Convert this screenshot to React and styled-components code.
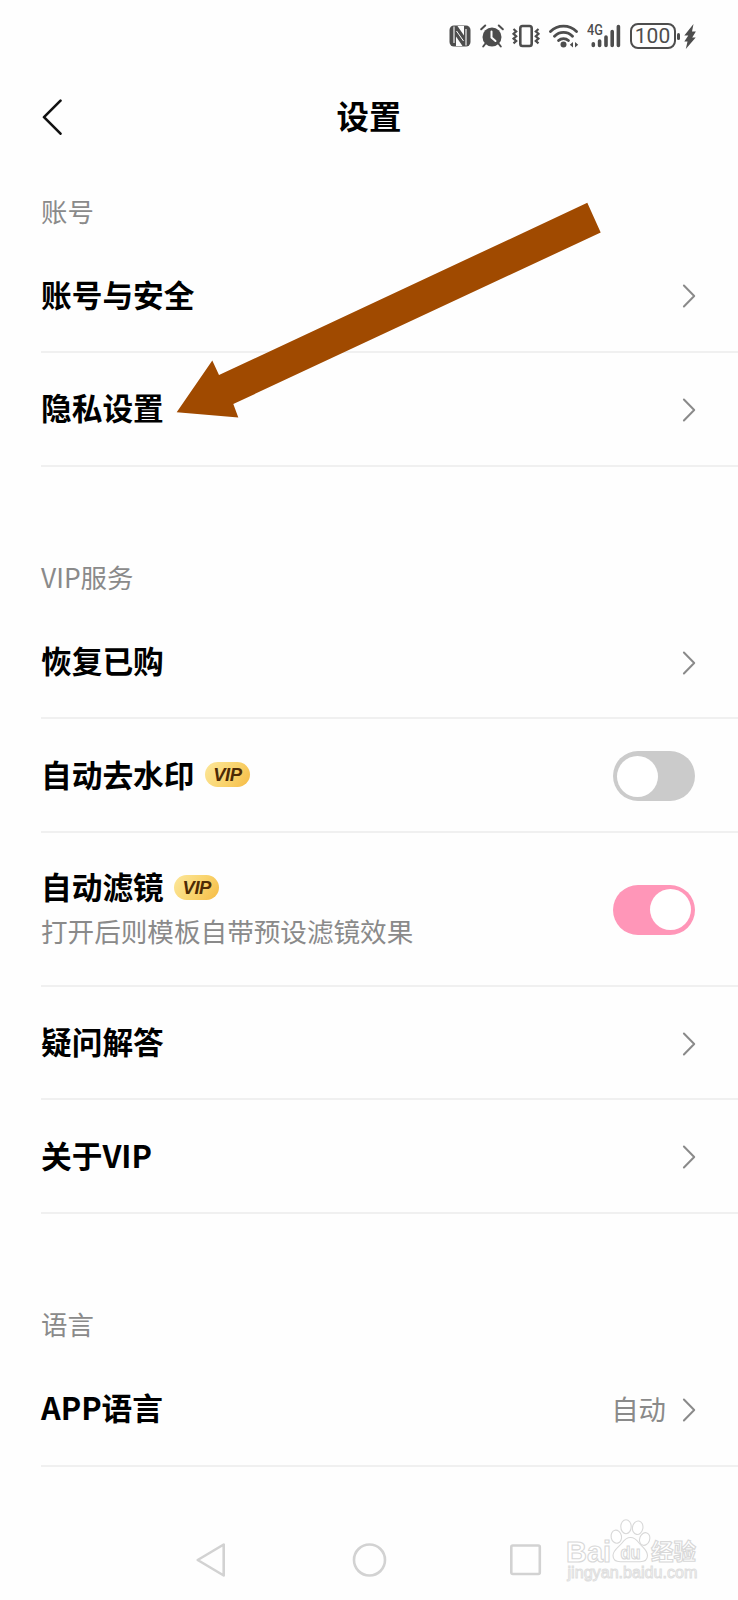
import { useState } from "react";
import styled, { createGlobalStyle } from "styled-components";

const GREY = "#8a8a8a";
const STATUS = "#4d4d4d";
const NAV = "#d2d2d2";

const NfcIcon = () => (
  <svg width="22" height="22" viewBox="0 0 22 22" fill="none">
    <rect x="0.500" y="0.500" width="21" height="21" rx="4.500" fill={STATUS} />
    <path d="M5 1.500v16.500M17 4v16.500" stroke="#fefefe" strokeWidth="1.100" />
    <path d="M8.500 1h6.500v9.500zM13.500 21H7V11.500z" fill="#fefefe" />
    <path d="M7.500 6l7 10" stroke="#fefefe" strokeWidth="1" />
  </svg>
);

const AlarmIcon = () => (
  <svg width="24" height="24" viewBox="0 0 24 24" fill="none">
    <circle cx="12" cy="13" r="9.500" fill={STATUS} />
    <path d="M1.200 5.200l4-3.700M22.800 5.200l-4-3.700" stroke={STATUS} strokeWidth="2" strokeLinecap="round" />
    <path d="M5.500 19.500L3.200 22.500M18.500 19.500l2.300 3" stroke={STATUS} strokeWidth="2" strokeLinecap="round" />
    <path d="M11.500 7.500v6l4 3.500" stroke="#fefefe" strokeWidth="2" strokeLinecap="round" />
  </svg>
);

const VibrateIcon = () => (
  <svg width="28" height="24" viewBox="0 0 28 24" fill="none" stroke={STATUS}>
    <rect x="8.300" y="2" width="11.400" height="20" rx="2.200" strokeWidth="2.600" />
    <path d="M1.500 5l2.700 2.400-2.700 2.400 2.700 2.400-2.700 2.400 2.700 2.400-2.700 2.400" strokeWidth="2.200" />
    <path d="M26.500 5l-2.700 2.400 2.700 2.400-2.700 2.400 2.700 2.400-2.700 2.400 2.700 2.400" strokeWidth="2.200" />
  </svg>
);

const WifiIcon = () => (
  <svg width="30" height="24" viewBox="0 0 30 24" fill="none">
    <path
      d="M1.500 7.500a18.500 18.500 0 0 1 26 0M5.500 12.200a12.500 12.500 0 0 1 18 0M9.600 16.600a7 7 0 0 1 9.800 0"
      stroke={STATUS}
      strokeWidth="2.800"
      strokeLinecap="round"
    />
    <circle cx="14.500" cy="20.500" r="3" fill={STATUS} />
    <path d="M24 18v5.500l-3.200-2.700zM26 18v5.500l3.200-2.700z" fill={STATUS} />
  </svg>
);

const SignalBars = () => (
  <svg width="30" height="24" viewBox="0 0 30 24" stroke={STATUS} strokeWidth="3.600" strokeLinecap="round">
    <path d="M2.300 19.800v1.700M8.600 17v4.500M15 13v8.500M21.200 7.500v14M27.400 2.500v19" />
  </svg>
);

const BoltIcon = () => (
  <svg width="12" height="25" viewBox="0 0 12 25">
    <path d="M9.500 0L0.300 11.500h4L0.300 17.500h3.200L1.800 25 11.700 13.500H8.200L11.900 7.500H8z" fill={STATUS} />
  </svg>
);

const BackIcon = () => (
  <svg width="21" height="36" viewBox="0 0 21 36" fill="none">
    <path d="M19.500 1.700L3 18.200l16.500 16.500" stroke="#111" strokeWidth="2.600" strokeLinecap="round" strokeLinejoin="round" />
  </svg>
);

const Chevron = () => (
  <svg width="14" height="24" viewBox="0 0 14 24" fill="none">
    <path d="M1.900 1.500L12.200 12 1.900 22.500" stroke={GREY} strokeWidth="2" strokeLinecap="round" strokeLinejoin="round" />
  </svg>
);

const Arrow = () => (
  <ArrowSvg width="426" height="216" viewBox="0 0 426 216">
    <path d="M0.700 210.200L36.300 158.500 43 173 411.300 0.800 424.700 30.500 57.300 202 62.300 215.500z" fill="#a04a00" />
  </ArrowSvg>
);

const Watermark = () => (
  <WatermarkSvg width="140" height="68" viewBox="0 0 140 68">
    <g fill="#fff" stroke="#d8d8d8" strokeWidth="1.100">
      <ellipse cx="52.300" cy="18.700" rx="5.200" ry="6.600" transform="rotate(-12 52.300 18.700)" />
      <ellipse cx="62" cy="8.700" rx="5.200" ry="7" />
      <ellipse cx="73.700" cy="9.700" rx="5.200" ry="6.800" transform="rotate(10 73.700 9.700)" />
      <ellipse cx="80.700" cy="21" rx="5" ry="6.500" transform="rotate(20 80.700 21)" />
      <path d="M66.500 19.500c-4 0-6 2-8.500 5.500-3 4-9 7-9 12.500 0 4 3 6.200 7.500 6.200h19.500c4.500 0 7.500-2.200 7.500-6.200 0-5.500-5.500-8.500-8.500-12.500-2.500-3.500-4.500-5.500-8.500-5.500z" />
      <LatinText x="2" y="43.500" fontSize="30" textLength="45" lengthAdjust="spacingAndGlyphs">Bai</LatinText>
      <LatinText x="56.500" y="40.500" fontSize="18" textLength="20" lengthAdjust="spacingAndGlyphs">du</LatinText>
      <text x="87" y="42" fontSize="22.500" fontWeight="700">经验</text>
    </g>
    <UrlText
      x="3.500"
      y="60"
      fontSize="16"
      fill="#fff"
      stroke="#dedede"
      strokeWidth="1"
      textLength="130"
      lengthAdjust="spacingAndGlyphs"
    >
      jingyan.baidu.com
    </UrlText>
  </WatermarkSvg>
);

const Switch = ({ defaultOn = false }) => {
  const [on, setOn] = useState(defaultOn);
  return (
    <Track type="button" role="switch" aria-checked={on} $on={on} onClick={() => setOn(!on)}>
      <Knob />
    </Track>
  );
};

const Item = ({ title, vip, desc, value, children }) => (
  <Row $tall={!!desc}>
    <Texts>
      <Name>
        {title}
        {vip && <VipBadge>VIP</VipBadge>}
      </Name>
      {desc && <Description>{desc}</Description>}
    </Texts>
    <Side>
      {value && <Value>{value}</Value>}
      {children || <Chevron />}
    </Side>
  </Row>
);

const App = () => {
  return (
    <Screen>
      <GlobalStyle />
      <StatusBar>
        <NfcIcon />
        <AlarmIcon />
        <VibrateIcon />
        <WifiIcon />
        <Signal>
          <Network>4G</Network>
          <SignalBars />
        </Signal>
        <Battery>100</Battery>
        <BoltIcon />
      </StatusBar>
      <Header>
        <BackIcon />
        <Title>设置</Title>
      </Header>

      <Section>
        <Label>账号</Label>
        <Item title="账号与安全" />
        <Item title="隐私设置" />
      </Section>

      <Section>
        <Label>VIP服务</Label>
        <Item title="恢复已购" />
        <Item title="自动去水印" vip>
          <Switch />
        </Item>
        <Item title="自动滤镜" vip desc="打开后则模板自带预设滤镜效果">
          <Switch defaultOn />
        </Item>
        <Item title="疑问解答" />
        <Item title="关于VIP" />
      </Section>

      <Section>
        <Label>语言</Label>
        <Item title="APP语言" value="自动" />
      </Section>

      <NavBar>
        <svg width="34" height="36" viewBox="0 0 34 36" fill="none">
          <path d="M28.700 2.500v31L2.700 18z" stroke={NAV} strokeWidth="2.600" strokeLinejoin="round" />
        </svg>
        <svg width="36" height="36" viewBox="0 0 36 36" fill="none">
          <circle cx="18.500" cy="18" r="15.500" stroke={NAV} strokeWidth="2.600" />
        </svg>
        <svg width="36" height="36" viewBox="0 0 36 36" fill="none">
          <rect x="3.300" y="3.500" width="28.500" height="28.500" rx="1.500" stroke={NAV} strokeWidth="2.600" />
        </svg>
      </NavBar>

      <Arrow />
      <Watermark />
    </Screen>
  );
};

export default App;

const GlobalStyle = createGlobalStyle`
  * {
    box-sizing: border-box;
  }

  body {
    margin: 0;
    background: #fefefe;
    font-family: "Noto Sans CJK SC", sans-serif;
  }

  svg {
    display: block;
    flex-shrink: 0;
  }
`;

const Screen = styled.div`
  width: 738px;
  height: 1600px;

  display: flex;
  flex-direction: column;

  position: relative;
  overflow: hidden;
  background: #fefefe;
`;

const StatusBar = styled.div`
  height: 72px;
  padding-right: 42px;

  display: flex;
  align-items: center;
  justify-content: flex-end;
  gap: 8.500px;
`;

const Signal = styled.div`
  width: 34px;

  display: flex;
  align-items: flex-start;
`;

const Network = styled.span`
  width: 16px;
  margin-right: -12px;

  color: ${STATUS};
  font-family: Roboto, sans-serif;
  font-size: 15px;
  font-weight: 500;
  line-height: 12px;

  transform: scaleX(0.85);
  transform-origin: left;
`;

const Battery = styled.div`
  width: 46px;
  height: 26px;

  display: flex;
  align-items: center;
  justify-content: center;

  position: relative;
  border: 2px solid ${STATUS};
  border-radius: 8px;

  color: ${STATUS};
  font-family: Roboto, sans-serif;
  font-size: 21px;
  line-height: 22px;

  &::after {
    content: "";
    width: 3px;
    height: 7px;

    position: absolute;
    top: 7.500px;
    right: -6.500px;
    border-radius: 1.500px;
    background: ${STATUS};
  }
`;

const Header = styled.header`
  height: 90px;
  margin-bottom: 23.500px;
  padding: 0 41px;

  display: grid;
  grid-template-columns: 60px 1fr 60px;
  align-items: center;
`;

const Title = styled.h1`
  margin: 0;
  padding-bottom: 4px;

  text-align: center;
  color: #000;
  font-size: 32.400px;
  font-weight: 700;
  line-height: 44px;
`;

const Section = styled.section`
  & + & {
    margin-top: 85.300px;
  }
`;

const Label = styled.h2`
  height: 54px;
  margin: 0;
  padding-left: 41px;

  color: ${GREY};
  font-size: 26.400px;
  font-weight: 400;
  line-height: 50px;
`;

const Row = styled.div`
  height: ${({ $tall }) => ($tall ? 154 : 113.5)}px;
  margin-left: 41px;
  padding: 2px 42px 0 0;

  display: flex;
  align-items: center;
  justify-content: space-between;

  border-bottom: 2px solid #f0f0f0;
`;

const Texts = styled.div`
  padding-bottom: 5px;
`;

const Name = styled.div`
  display: flex;
  align-items: center;

  color: #000;
  font-size: 30.700px;
  font-weight: 700;
  line-height: 44px;
`;

const VipBadge = styled.span`
  width: 45px;
  height: 25px;
  margin: 2px 0 0 10.500px;

  display: flex;
  align-items: center;
  justify-content: center;

  border-radius: 13px;
  background: linear-gradient(125deg, #fce79b, #f9d36c 55%, #f6bb45);

  color: #4d2a05;
  font-family: "Liberation Sans", sans-serif;
  font-size: 18.500px;
  font-style: italic;
  font-weight: 700;
  letter-spacing: -0.500px;
  line-height: 25px;
`;

const Description = styled.div`
  margin-bottom: -2px;
  padding-top: 2px;

  color: ${GREY};
  font-size: 26.600px;
  line-height: 42px;
`;

const Side = styled.div`
  display: flex;
  align-items: center;
  gap: 16px;
`;

const Value = styled.span`
  padding-bottom: 3px;

  color: ${GREY};
  font-size: 27.400px;
  line-height: 40px;
`;

const Track = styled.button`
  width: 82px;
  height: 50px;
  margin-right: 1px;
  padding: 4px;

  display: flex;
  align-items: center;
  justify-content: ${({ $on }) => ($on ? "flex-end" : "flex-start")};

  border: 0;
  border-radius: 25px;
  background: ${({ $on }) => ($on ? "#ff96b8" : "#cbcbcb")};
`;

const Knob = styled.span`
  width: 41px;
  height: 41px;

  border-radius: 50%;
  background: #fff;
`;

const NavBar = styled.nav`
  height: 80px;
  margin-top: auto;
  padding: 0 194px 0 195px;

  display: flex;
  align-items: center;
  justify-content: space-between;
`;

const ArrowSvg = styled.svg`
  position: absolute;
  top: 201.500px;
  left: 176px;
`;

const WatermarkSvg = styled.svg`
  position: absolute;
  top: 1518px;
  left: 564px;

  font-family: "Noto Sans CJK SC", sans-serif;
`;

const LatinText = styled.text`
  font-family: "Liberation Sans", sans-serif;
  font-weight: 700;
`;

const UrlText = styled.text`
  font-family: "Liberation Sans", sans-serif;
  font-weight: 400;
`;
